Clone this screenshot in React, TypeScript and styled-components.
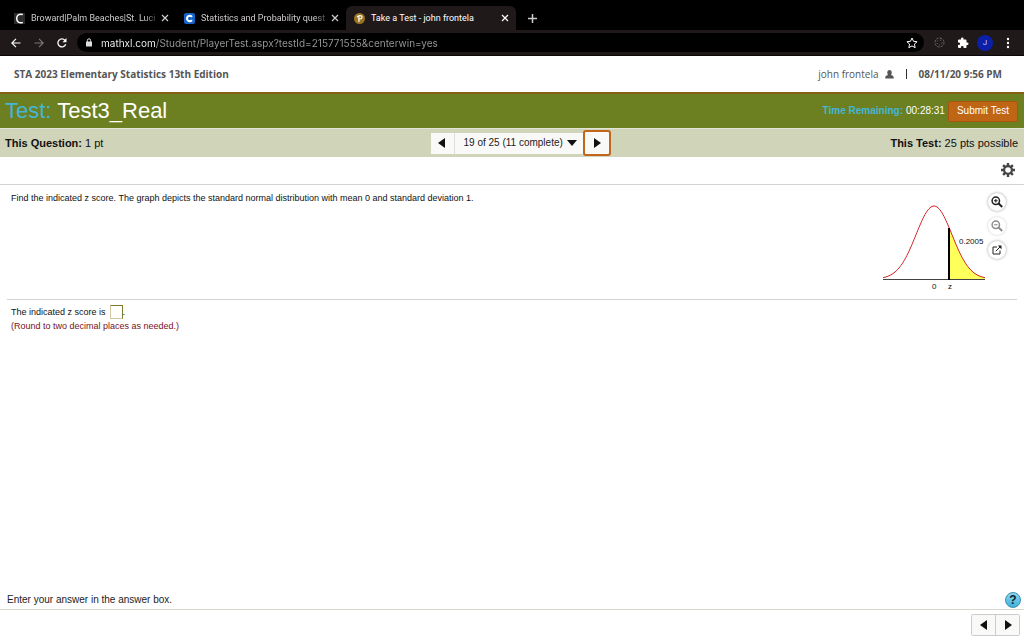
import React from "react";
import styled, { createGlobalStyle, css } from "styled-components";

const helvetica = `"Liberation Sans", Arial, Helvetica, sans-serif`;
const openSans = `"Open Sans", "Noto Sans", sans-serif`;
const chromeFont = `Roboto, Inter, sans-serif`;

const GlobalStyle = createGlobalStyle`
  *, *::before, *::after { box-sizing: border-box; }
  body { margin: 0; background: #fff; color: #111; font-family: ${helvetica}; }
  button, input, select { font: inherit; color: inherit; margin: 0; }
  button { padding: 0; border: 0; background: none; cursor: pointer; }
  svg { display: block; flex: none; }
`;

const Page = styled.div`
  display: flex;
  flex-direction: column;
  min-height: 100vh;
`;

/* Browser window */

const TabStrip = styled.div`
  display: flex;
  align-items: flex-end;
  height: 30px;
  padding-left: 6px;
  background: #000;
  font-family: ${chromeFont};
`;

const Tab = styled.div<{ $active?: boolean }>`
  display: flex;
  align-items: center;
  width: 170px;
  height: 24px;
  padding: 0 6px 0 8px;
  border-radius: 6px 6px 0 0;
  color: ${(p) => (p.$active ? "#fff" : "#d0cccc")};
  background: ${(p) => (p.$active ? "#1f1919" : "transparent")};
`;

const TabTitle = styled.span<{ $fade?: boolean }>`
  flex: 1;
  margin-left: 6px;
  white-space: nowrap;
  font-size: 9px;
  line-height: 12px;
  ${(p) =>
    p.$fade &&
    css`
      mask-image: linear-gradient(to right, #000 88%, transparent);
    `}
`;

const TabButton = styled.button`
  display: grid;
  place-items: center;
  width: 10px;
  height: 12px;
`;

const NewTab = styled(TabButton)`
  width: 32px;
  height: 24px;
  color: #d0cccc;
`;

const Toolbar = styled.div`
  display: flex;
  align-items: center;
  height: 26px;
  padding: 0 5px 0 4px;
  background: #1f1919;
  border-bottom: 1px solid #0c0808;
  color: #fff;
  font-family: ${chromeFont};
`;

const ToolButton = styled.button<{ $dim?: boolean }>`
  display: grid;
  place-items: center;
  width: 23px;
  height: 20px;
  color: ${(p) => (p.$dim ? "#7c7676" : "#fff")};
`;

const AddressBar = styled.div`
  display: flex;
  align-items: center;
  gap: 8px;
  flex: 1;
  height: 19px;
  margin: 0 4px;
  padding: 0 1px 0 8px;
  border-radius: 10px;
  background: #000;
`;

const AddressInput = styled.input`
  flex: 1;
  min-width: 0;
  padding: 0;
  border: 0;
  outline: 0;
  font-family: Inter, Roboto, sans-serif;
  font-size: 10px;
  line-height: 16px;
  color: #9a9a9a;
  background: linear-gradient(to right, #fff 55px, #9a9a9a 55px);
  background-clip: text;
  -webkit-background-clip: text;
  -webkit-text-fill-color: transparent;
`;

const Avatar = styled.button`
  width: 16px;
  height: 16px;
  margin: 0 3px;
  border-radius: 50%;
  background: #0c1fa8;
  color: #c6cbf5;
  font-size: 8px;
  line-height: 16px;
`;

/* Test player */

const CourseHeader = styled.header`
  display: flex;
  align-items: center;
  justify-content: space-between;
  height: 36px;
  padding: 0 22px 0 14px;
  color: #555;
  font-family: ${openSans};
  font-size: 10px;
  line-height: 14px;
`;

const CourseName = styled.strong``;

const UserInfo = styled.div`
  display: flex;
  align-items: center;
  gap: 6px;
`;

const Divider = styled.span`
  width: 1px;
  height: 10px;
  margin: 0 6px;
  background: #333;
`;

const TitleBar = styled.div`
  display: flex;
  align-items: center;
  justify-content: space-between;
  height: 36px;
  padding: 0 6px 0 5px;
  border-top: 2px solid #865f12;
  background: #6c7f21;
  color: #fff;
`;

const Title = styled.h1`
  margin: 0;
  font-size: 22px;
  line-height: 28px;
  font-weight: 400;
`;

const Accent = styled.span`
  color: #45b6d6;
`;

const Timer = styled.div`
  display: flex;
  align-items: center;
  gap: 3px;
  font-size: 10px;
  line-height: 14px;
`;

const SubmitButton = styled.button`
  height: 21px;
  padding: 0 8px;
  border: 1px solid #a9540f;
  border-radius: 2px;
  background: #bf6516;
  color: #fff;
`;

const QuestionBar = styled.div`
  display: grid;
  grid-template-columns: 1fr auto 1fr;
  align-items: center;
  height: 29px;
  padding: 0 6px 0 5px;
  border-top: 1px solid #e3e5d6;
  background: #d0d4b9;
  font-size: 11px;
  line-height: 16px;
`;

const Points = styled.div<{ $end?: boolean }>`
  text-align: ${(p) => (p.$end ? "right" : "left")};
`;

const Pager = styled.nav`
  display: flex;
  align-items: center;
  margin-left: 18px;
`;

const arrowButton = css`
  display: grid;
  place-items: center;
  color: #111;
  background: #f9f9f8;
`;

const PreviousButton = styled.button`
  ${arrowButton}
  width: 24px;
  height: 21px;
  border-right: 1px solid #ddd;
`;

const NextButton = styled.button`
  ${arrowButton}
  width: 28px;
  height: 26px;
  border: 2px solid #c1661a;
  border-radius: 3px;
`;

const QuestionPicker = styled.label`
  display: flex;
  align-items: center;
  gap: 3px;
  width: 128px;
  height: 21px;
  padding-left: 9px;
  background: #f9f9f8;
`;

const QuestionSelect = styled.select`
  appearance: none;
  padding: 0;
  border: 0;
  background: none;
  font-size: 10px;
  line-height: 14px;
  color: #222;
`;

const SettingsRow = styled.div`
  display: flex;
  align-items: flex-start;
  justify-content: flex-end;
  height: 28px;
  padding: 6px 9px 0 0;
  border-bottom: 1px solid #d4d2d0;
`;

const IconButton = styled.button`
  color: #444;
`;

const Main = styled.main`
  display: flex;
  flex-direction: column;
  flex: 1;
  padding: 0 7px;
`;

const Question = styled.section`
  display: flex;
  justify-content: space-between;
  height: 115px;
  padding: 6px 0 0 4px;
  border-bottom: 1px solid #d4d2d0;
  font-size: 9px;
  line-height: 14px;
`;

const Prompt = styled.p`
  margin: 0;
`;

const Figure = styled.div`
  display: flex;
  gap: 2px;
`;

const ZoomTools = styled.div`
  display: flex;
  flex-direction: column;
  gap: 6px;
  padding: 2px 11px 0 0;
`;

const RoundButton = styled.button`
  display: grid;
  place-items: center;
  width: 18px;
  height: 18px;
  border-radius: 50%;
  background: #fff;
  box-shadow: 0 0 3px #999;
  color: #222;

  &:disabled {
    color: #8c8c8c;
    box-shadow: 0 0 3px #ccc;
  }
`;

const Answer = styled.section`
  padding: 5px 4px 0;
  font-size: 9px;
  line-height: 14px;
`;

const AnswerLine = styled.label`
  display: flex;
  align-items: center;
  height: 14px;
`;

const AnswerInput = styled.input`
  width: 13px;
  height: 14px;
  margin-left: 4px;
  padding: 0;
  border: 1px solid #7d7a2c;
  border-left-color: #d5c7a0;
  border-bottom-color: #d5c7a0;
  background: #fff;
`;

const Hint = styled.p`
  margin: 0;
  color: #7a1018;
`;

const HelpRow = styled.div`
  display: flex;
  align-items: center;
  justify-content: space-between;
  height: 20px;
  padding: 0 3px 0 7px;
  border-bottom: 1px solid #d9d7d0;
  color: #222;
  font-size: 10px;
  line-height: 14px;
`;

const HelpButton = styled.button`
  width: 16px;
  height: 16px;
  border: 1px solid #3d8fae;
  border-radius: 50%;
  background: linear-gradient(#8fd6f2, #3fb0dd);
  color: #0b2532;
  font-size: 12px;
  line-height: 14px;
  font-weight: 700;
`;

const Footer = styled.footer`
  display: flex;
  justify-content: flex-end;
  height: 30px;
  padding: 4px 4px 0 0;
`;

const FooterPager = styled.nav`
  display: flex;
  height: 22px;
  border: 1px solid #ccc;
  border-radius: 2px;
`;

const FooterButton = styled.button`
  ${arrowButton}
  width: 23px;

  & + & {
    width: 24px;
    border-left: 1px solid #ccc;
  }
`;

const Cross = () => (
  <svg width="8" height="8" viewBox="0 0 8 8" stroke="currentColor" strokeWidth="1.2" fill="none">
    <path d="M1 1l6 6M7 1l-6 6" />
  </svg>
);

const Arrow = ({ dir }: { dir: "left" | "right" | "down" }) => {
  const d = {
    left: "M8 0v10L1 5z",
    right: "M2 0v10L9 5z",
    down: "M0 2h10L5 8z",
  }[dir];
  return (
    <svg width="10" height="10" viewBox="0 0 10 10" fill="currentColor">
      <path d={d} />
    </svg>
  );
};

const Magnifier = ({ plus }: { plus?: boolean }) => (
  <svg width="12" height="12" viewBox="0 0 12 12" fill="none" stroke="currentColor">
    <circle cx="4.8" cy="4.8" r="3.7" strokeWidth="1.5" />
    <path d="M7.6 7.6l3.6 3.4" strokeWidth="2" />
    <path d={plus ? "M3 4.8h3.6M4.8 3v3.6" : "M3 4.8h3.6"} strokeWidth="1.1" />
  </svg>
);

const CENTER = 51;
const BASE = 88;
const PEAK = 73;
const SIGMA = 18;
const Z = 66;

const curve = (from: number, to: number) => {
  const points: string[] = [];
  for (let x = from; x <= to; x += 1) {
    const t = (x - CENTER) / SIGMA;
    points.push(`${x},${(BASE - PEAK * Math.exp((-t * t) / 2)).toFixed(2)}`);
  }
  return points.join(" ");
};

const NormalCurve = () => (
  <svg width="103" height="106" viewBox="0 0 103 106" role="img" aria-label="Standard normal curve, area 0.2005 right of z">
    <polygon points={`${Z},${BASE} ${curve(Z, 102)} 102,${BASE}`} fill="#ffff5c" />
    <path d={`M0 ${BASE + 0.5}H102`} stroke="#444" />
    <polyline points={curve(0, 102)} fill="none" stroke="#d3242c" />
    <path d={`M${Z} 37V${BASE + 1}`} stroke="#000" strokeWidth="2" />
    <g fontFamily="Liberation Sans, Arial, sans-serif" fontSize="8" fill="#111">
      <text x="76" y="53">0.2005</text>
      <text x="49" y="98">0</text>
      <text x="65" y="98">z</text>
    </g>
  </svg>
);

export default function App() {
  return (
    <Page>
      <GlobalStyle />
      <TabStrip>
        <Tab>
          <svg width="11" height="11" viewBox="0 0 11 11">
            <rect width="11" height="11" fill="#2c2c2c" />
            <path d="M8.8 1.6C5 .6 2.7 2 2.7 5.4S5 10.3 8.8 9.4" fill="none" stroke="#fff" strokeWidth="1.5" />
          </svg>
          <TabTitle $fade>Broward|Palm Beaches|St. Luci</TabTitle>
          <TabButton aria-label="Close tab"><Cross /></TabButton>
        </Tab>
        <Tab>
          <svg width="11" height="11" viewBox="0 0 11 11">
            <rect width="11" height="11" rx="2" fill="#1565c8" />
            <path d="M8 3.8A2.8 2.8 0 1 0 8 7.2" fill="none" stroke="#fff" strokeWidth="2" />
          </svg>
          <TabTitle $fade>Statistics and Probability quest</TabTitle>
          <TabButton aria-label="Close tab"><Cross /></TabButton>
        </Tab>
        <Tab $active>
          <svg width="11" height="11" viewBox="0 0 11 11">
            <circle cx="5.5" cy="5.5" r="5.5" fill="#9b7320" />
            <path d="M4.9 9V3M3 4.3C4 2 8.3 2 8 4.2 7.8 5.8 6 6.2 5 5.9" fill="none" stroke="#fff" strokeWidth="1.2" />
          </svg>
          <TabTitle>Take a Test - john frontela</TabTitle>
          <TabButton aria-label="Close tab"><Cross /></TabButton>
        </Tab>
        <NewTab aria-label="New tab">
          <svg width="9" height="9" viewBox="0 0 9 9" stroke="currentColor" strokeWidth="1.5">
            <path d="M4.5 0v9M0 4.5h9" />
          </svg>
        </NewTab>
      </TabStrip>

      <Toolbar>
        <ToolButton aria-label="Back">
          <svg width="10" height="10" viewBox="0 0 10 10" fill="none" stroke="currentColor" strokeWidth="1.2">
            <path d="M9.5 5H1M5 .8L.8 5 5 9.2" />
          </svg>
        </ToolButton>
        <ToolButton aria-label="Forward" $dim>
          <svg width="10" height="10" viewBox="0 0 10 10" fill="none" stroke="currentColor" strokeWidth="1.2">
            <path d="M.5 5H9M5 .8L9.2 5 5 9.2" />
          </svg>
        </ToolButton>
        <ToolButton aria-label="Reload">
          <svg width="10" height="10" viewBox="0 0 10 10" fill="none" stroke="currentColor" strokeWidth="1.3">
            <path d="M8.7 6.2A4 4 0 1 1 8 2.3" />
            <path d="M9.5 0v4.2H5.4z" fill="currentColor" stroke="none" />
          </svg>
        </ToolButton>
        <AddressBar>
          <svg width="8" height="9" viewBox="0 0 8 9" fill="none">
            <rect x="1" y="3.5" width="6" height="5" rx=".6" fill="#ddd" />
            <path d="M2.4 4V2.4a1.6 1.6 0 0 1 3.2 0V4" stroke="#ddd" />
          </svg>
          <AddressInput
            aria-label="Address"
            defaultValue="mathxl.com/Student/PlayerTest.aspx?testId=215771555&centerwin=yes"
          />
          <ToolButton aria-label="Bookmark">
            <svg width="12" height="12" viewBox="0 0 12 12" fill="none" stroke="currentColor">
              <path d="M6 1l1.5 3.3 3.6.4-2.7 2.4.8 3.6L6 8.900l-3.2 1.8.8-3.6L.9 4.7l3.6-.4z" />
            </svg>
          </ToolButton>
        </AddressBar>
        <ToolButton aria-label="Extension" $dim>
          <svg width="11" height="11" viewBox="0 0 11 11" fill="none" stroke="currentColor">
            <circle cx="5.5" cy="5.5" r="4.5" strokeDasharray="2 1.5" />
            <circle cx="5.5" cy="5.5" r="2.5" strokeDasharray="1 2" />
          </svg>
        </ToolButton>
        <ToolButton aria-label="Extensions">
          <svg width="12" height="12" viewBox="0 0 24 24" fill="currentColor">
            <path d="M20.5 11H19V7a2 2 0 0 0-2-2h-4V3.5a2.5 2.5 0 0 0-5 0V5H4a2 2 0 0 0-2 2v3.8h1.5a2.7 2.7 0 0 1 0 5.4H2V20a2 2 0 0 0 2 2h3.8v-1.5a2.7 2.7 0 0 1 5.4 0V22H17a2 2 0 0 0 2-2v-4h1.5a2.5 2.5 0 0 0 0-5z" />
          </svg>
        </ToolButton>
        <Avatar aria-label="Profile">J</Avatar>
        <ToolButton aria-label="Browser menu">
          <svg width="4" height="12" viewBox="0 0 4 12" fill="currentColor">
            <circle cx="2" cy="2" r="1.2" />
            <circle cx="2" cy="6" r="1.2" />
            <circle cx="2" cy="10" r="1.2" />
          </svg>
        </ToolButton>
      </Toolbar>

      <CourseHeader>
        <CourseName>STA 2023 Elementary Statistics 13th Edition</CourseName>
        <UserInfo>
          <span>john frontela</span>
          <svg width="9" height="9" viewBox="0 0 9 9" fill="#555">
            <ellipse cx="4.5" cy="2.7" rx="2.2" ry="2.7" />
            <path d="M.3 8.5V7.2C.3 5.500 2.500 5.500 3.300 4.800h2.400C6.500 5.500 8.700 5.500 8.700 7.200v1.300z" />
          </svg>
          <Divider />
          <strong>08/11/20 9:56 PM</strong>
        </UserInfo>
      </CourseHeader>

      <TitleBar>
        <Title><Accent>Test:</Accent> Test3_Real</Title>
        <Timer>
          <Accent as="strong">Time Remaining:</Accent>
          <span>00:28:31</span>
          <SubmitButton>Submit Test</SubmitButton>
        </Timer>
      </TitleBar>

      <QuestionBar>
        <Points><strong>This Question:</strong> 1 pt</Points>
        <Pager aria-label="Questions">
          <PreviousButton aria-label="Previous question"><Arrow dir="left" /></PreviousButton>
          <QuestionPicker>
            <QuestionSelect aria-label="Question">
              <option>19 of 25 (11 complete)</option>
            </QuestionSelect>
            <Arrow dir="down" />
          </QuestionPicker>
          <NextButton aria-label="Next question"><Arrow dir="right" /></NextButton>
        </Pager>
        <Points $end><strong>This Test:</strong> 25 pts possible</Points>
      </QuestionBar>

      <SettingsRow>
        <IconButton aria-label="Settings">
          <svg width="14" height="14" viewBox="0 0 14 14" fill="none" stroke="currentColor">
            <circle cx="7" cy="7" r="3.9" strokeWidth="2.2" />
            <path d="M7 0v2.5M7 11.5V14M0 7h2.5M11.5 7H14M2.1 2.1l1.8 1.8M10.1 10.1l1.8 1.8M11.9 2.1l-1.8 1.8M3.9 10.1l-1.8 1.8" strokeWidth="2.4" />
          </svg>
        </IconButton>
      </SettingsRow>

      <Main>
        <Question>
          <Prompt>
            Find the indicated z score. The graph depicts the standard normal distribution with mean 0 and standard deviation 1.
          </Prompt>
          <Figure>
            <NormalCurve />
            <ZoomTools>
              <RoundButton aria-label="Zoom in"><Magnifier plus /></RoundButton>
              <RoundButton aria-label="Zoom out" disabled><Magnifier /></RoundButton>
              <RoundButton aria-label="Open in new window">
                <svg width="10" height="10" viewBox="0 0 10 10" fill="none" stroke="currentColor">
                  <path d="M5 2H1v7h7V5.5M3.8 6.2L8 2" />
                  <path d="M5.8.5h3.7v3.7z" fill="currentColor" stroke="none" />
                </svg>
              </RoundButton>
            </ZoomTools>
          </Figure>
        </Question>
        <Answer>
          <AnswerLine>
            The indicated z score is <AnswerInput type="text" />.
          </AnswerLine>
          <Hint>(Round to two decimal places as needed.)</Hint>
        </Answer>
      </Main>

      <HelpRow>
        <span>Enter your answer in the answer box.</span>
        <HelpButton aria-label="Help">?</HelpButton>
      </HelpRow>
      <Footer>
        <FooterPager aria-label="Previous and next">
          <FooterButton aria-label="Previous"><Arrow dir="left" /></FooterButton>
          <FooterButton aria-label="Next"><Arrow dir="right" /></FooterButton>
        </FooterPager>
      </Footer>
    </Page>
  );
}
